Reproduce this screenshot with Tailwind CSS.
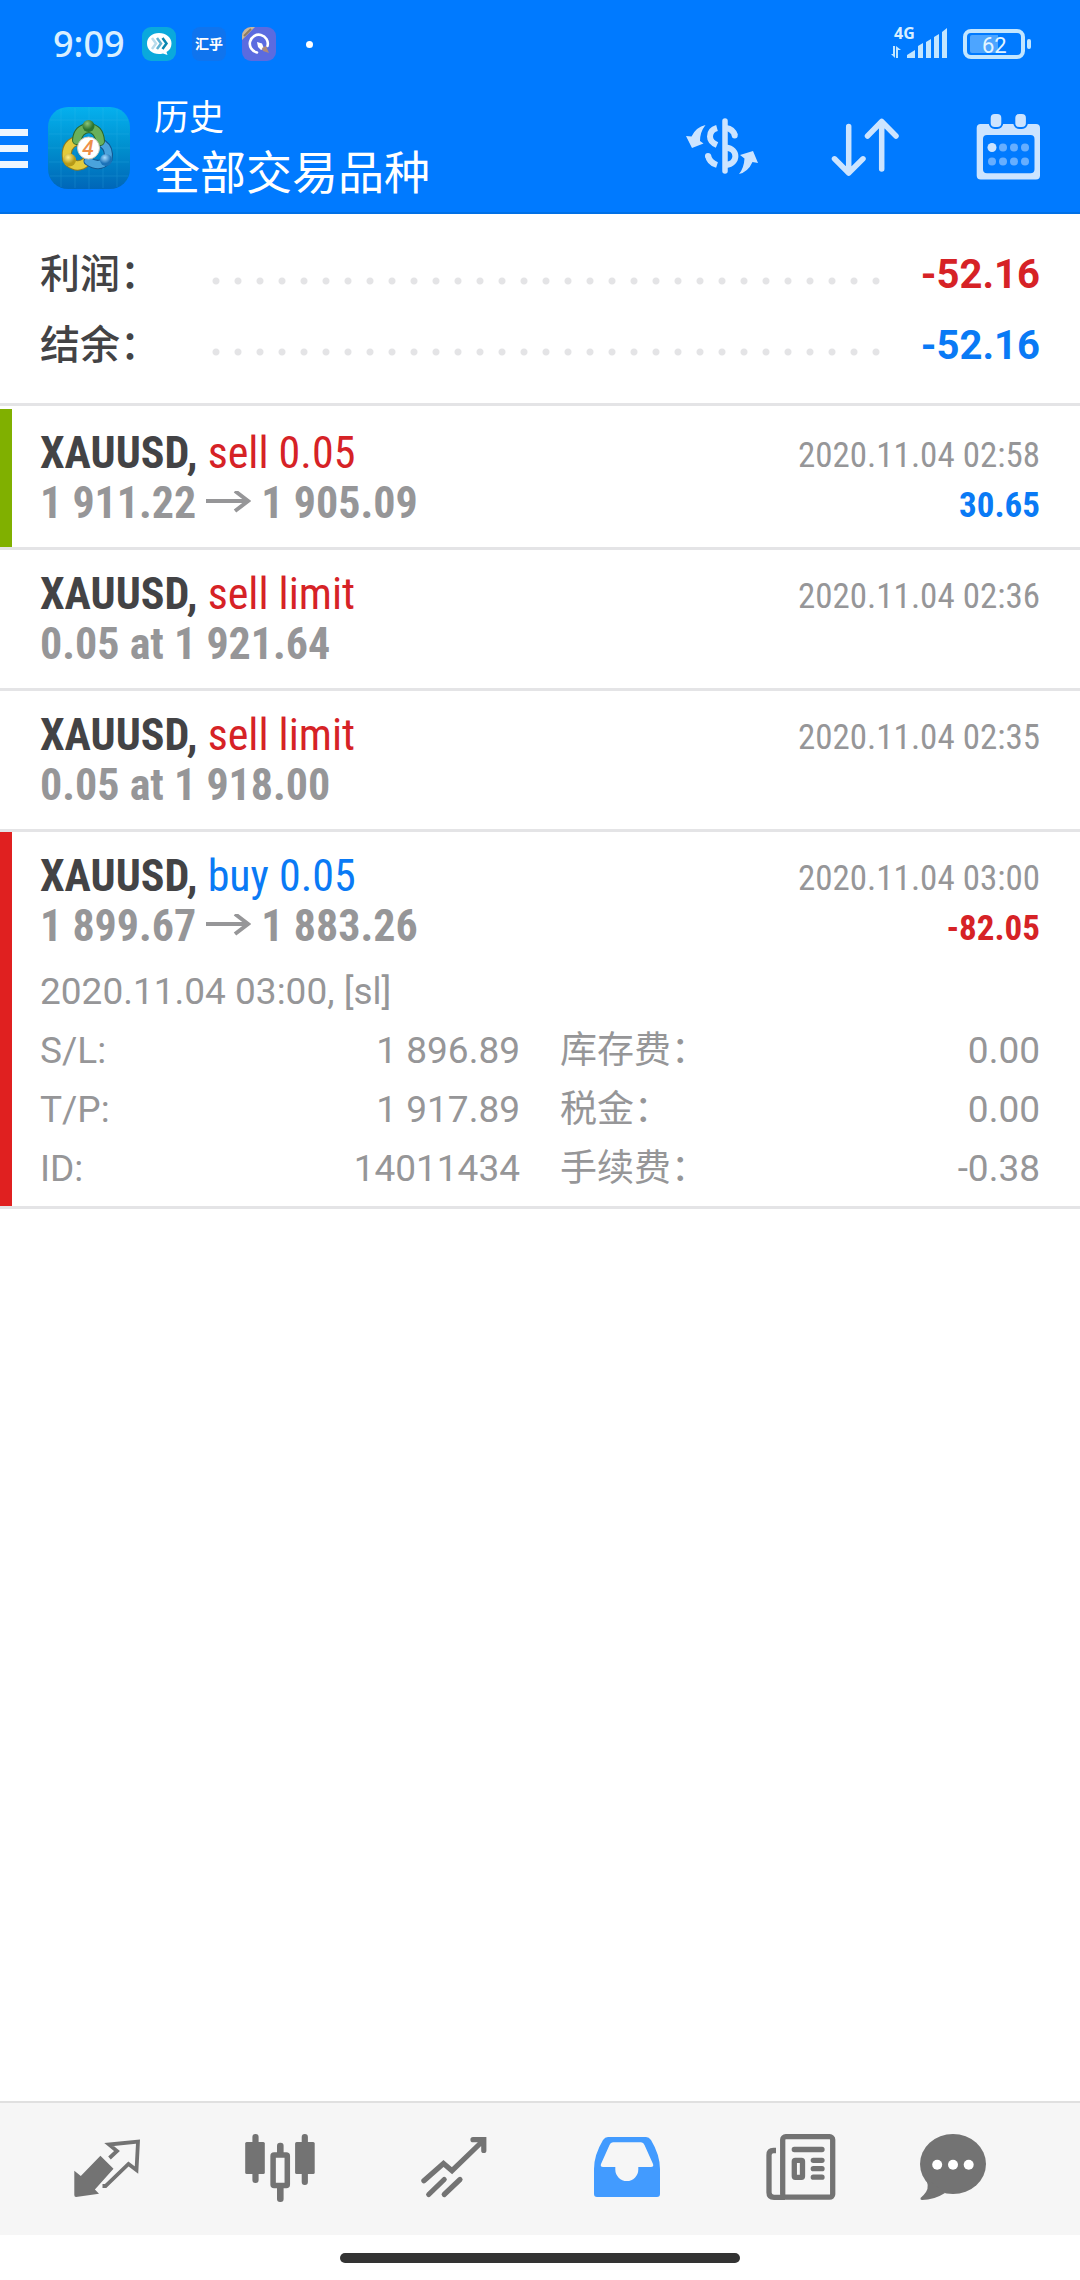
<!DOCTYPE html>
<html lang="zh-CN">
<head>
<meta charset="utf-8">
<meta name="viewport" content="width=device-width, initial-scale=1">
<title>历史</title>
<script src="https://cdn.jsdelivr.net/npm/@tailwindcss/browser@4"></script>
</head>
<body class="flex min-h-screen flex-col bg-white font-[Roboto,'Noto_Sans_CJK_SC',sans-serif] text-[#969698]">

<header class="border-b-2 border-[#0070e6] bg-[#007aff] pb-1 text-white">
  <!-- Status bar -->
  <div class="flex h-[88px] items-center justify-between pr-12 pl-[53px] text-[#d9efff]">
    <div class="flex items-center gap-4">
      <span class="w-[73px] font-['Noto_Sans',sans-serif] text-[36px] leading-[40px] font-medium">9:09</span>
      <svg class="size-[34px]" viewBox="0 0 34 34" aria-hidden="true">
        <rect width="34" height="34" rx="9" fill="#0aa9dc"/>
        <path d="M17 6c7 0 12.500 4.500 12.500 10.500 0 4-2 7-5 8.500l1 3-4.500-1.500c-1.300.4-2.700.5-4 .5-7 0-12-4.500-12-10.500S10 6 17 6z" fill="#fff"/>
        <g fill="none" stroke-width="2.500"><path d="M10 11l4 5.500-4 5.500" stroke="#b9dcec"/><path d="M15 11l4 5.500-4 5.500" stroke="#5fb2d2"/><path d="M20.500 11l4 5.500-4 5.500" stroke="#0a86b0"/></g>
      </svg>
      <span class="flex size-[34px] items-center justify-center rounded-lg bg-[#0f74ee] text-[14px] leading-[20px] font-bold text-white">汇乎</span>
      <svg class="size-[34px]" viewBox="0 0 34 34" aria-hidden="true">
        <defs><clipPath id="tile"><rect width="34" height="34" rx="9"/></clipPath></defs>
        <g clip-path="url(#tile)"><rect width="34" height="34" fill="#5b6be0"/><path d="M0 0h13L0 13z" fill="#c9b79a"/><path d="M2 9L9 2" stroke="#8d7b62" stroke-width="2"/></g>
        <path d="M15 25.500A9 9 0 1 1 25.500 19" fill="none" stroke="#fff" stroke-width="2.600" stroke-linecap="round"/>
        <path d="M15 15l5 1.500 2 5-3 1.500-3-3z" fill="#fff"/><path d="M20 21l4-2 3 7-6-2z" fill="#b08a78"/>
      </svg>
      <span class="ml-[14px] size-[7px] rounded-full bg-white"></span>
    </div>
    <svg class="h-[36px] w-[142px] overflow-visible" viewBox="0 0 142 36" role="img" aria-label="4G 62%">
      <text x="4" y="13" font-family="Noto Sans" font-size="16" font-weight="700" fill="#d9efff">4G</text>
      <g fill="#c3e6ff">
        <path d="M3 20h2v12l-4-4h2zM8 32h-2V20l5 4H8z"/>
        <path d="M17 32v-3l8-5v8zM28 32V20l5-3v15zM36 32V16l5-3v19zM44 32V11l5-3v24zM52 32V6l5-4v30z"/>
        <rect x="137" y="13" width="4" height="10" rx="2"/>
      </g>
      <rect x="75" y="5" width="58" height="26" rx="6" fill="none" stroke="#c3e6ff" stroke-width="4"/>
      <path d="M82 9h26v18H82q-2 0-2-2V11q0-2 2-2z" fill="#4da5ff"/>
      <text x="92" y="27" font-family="Roboto" font-size="22" fill="#e3f5ff">62</text>
    </svg>
  </div>

  <!-- Toolbar -->
  <div class="flex h-[120px] items-center pr-10">
    <button type="button" aria-label="菜单" class="flex w-7 flex-col gap-[9px] text-white">
      <span class="h-[7px] bg-[#ecf6ff]"></span><span class="h-[7px] bg-[#ecf6ff]"></span><span class="h-[7px] bg-[#ecf6ff]"></span>
    </button>
    <svg class="ml-5 size-[82px] shrink-0" viewBox="0 0 82 82" aria-hidden="true">
      <defs>
        <linearGradient id="bg" x1="0" y1="0" x2="0" y2="1"><stop offset="0" stop-color="#05b0ee"/><stop offset=".5" stop-color="#008fce"/><stop offset="1" stop-color="#0066b8"/></linearGradient>
        <radialGradient id="gr" cx=".4" cy=".3"><stop offset="0" stop-color="#8cc478"/><stop offset="1" stop-color="#2c7530"/></radialGradient>
        <radialGradient id="ye" cx=".4" cy=".3"><stop offset="0" stop-color="#fff08a"/><stop offset="1" stop-color="#b79a18"/></radialGradient>
        <radialGradient id="bl" cx=".4" cy=".3"><stop offset="0" stop-color="#a8dcff"/><stop offset="1" stop-color="#1b72b8"/></radialGradient>
      </defs>
      <rect width="82" height="82" rx="20" fill="url(#bg)"/>
      <path d="M13 2v78M27 1v80M41 0v82M55 1v80M69 2v78M2 13h78M1 27h80M0 41h82M1 55h80M2 69h78" stroke="#4cc4f2" stroke-width="1" opacity=".18"/>
      <path d="M28 34Q17 38 19 52M21 55Q30 62 38 55" fill="none" stroke="#8d7a20" stroke-width="10" stroke-linecap="round"/>
      <path d="M28 34Q17 38 19 52M21 55Q30 62 38 55" fill="none" stroke="#e3cb3c" stroke-width="8" stroke-linecap="round"/>
      <path d="M55 37Q62 42 60 52Q52 62 40 54" fill="none" stroke="#12568f" stroke-width="9" stroke-linecap="round"/>
      <path d="M55 37Q62 42 60 52Q52 62 40 54" fill="none" stroke="#4aa3dc" stroke-width="7" stroke-linecap="round"/>
      <path d="M29 33Q30 22 41 21Q51 22 52 34" fill="none" stroke="#2b662a" stroke-width="10" stroke-linecap="round"/>
      <path d="M29 33Q30 22 41 21Q51 22 52 34" fill="none" stroke="#69b05a" stroke-width="8" stroke-linecap="round"/>
      <circle cx="40.500" cy="19" r="6" fill="url(#gr)"/><circle cx="21.500" cy="53" r="6.500" fill="url(#ye)"/><circle cx="58" cy="53" r="6" fill="url(#bl)"/>
      <circle cx="40.500" cy="41" r="11" fill="#fff" stroke="#cfcabc"/>
      <text x="40" y="48" text-anchor="middle" font-family="Roboto" font-size="21" font-style="italic" font-weight="500" fill="#ee8f4a">4</text>
    </svg>
    <div class="ml-6 flex flex-1 flex-col pb-1">
      <span class="text-[35px] leading-[54px]">历史</span>
      <h1 class="text-[46px] leading-[54px]">全部交易品种</h1>
    </div>
    <div class="flex items-center gap-[75px] text-[#cce4ff]">
      <button type="button" aria-label="交易品种">
        <svg class="block h-[66px] w-[72px] overflow-visible" viewBox="0 0 72 66" fill="none" stroke="currentColor" stroke-width="6">
          <path d="M39 6v50" stroke-linecap="round" stroke-width="5.500"/>
          <path d="M31 13Q24 15 24 21.500Q24 27 31 30M22 40Q23 47.500 31 50M40 13Q47 14 49 20.500" />
          <path d="M22 41v0M48.700 20.500v0" stroke-linecap="round"/>
          <path d="M40 32.500C52.500 34 52.500 48.500 40 50"/>
          <path d="M0 21L6 33L17.500 28.500L14 26Q14 17 19.500 10Q10 12 5.500 21.500ZM72 48L67 36L54 40L58.500 43.500Q58 53 53 59Q62 57 66.500 47Z" fill="currentColor" stroke="none"/>
        </svg>
      </button>
      <button type="button" aria-label="排序">
        <svg class="block h-[66px] w-[68px] overflow-visible" viewBox="0 0 68 66" fill="none" stroke="currentColor" stroke-width="5.500" stroke-linecap="round" stroke-linejoin="round">
          <path d="M15.700 11.500V58M1.500 43.800L15.700 58L30 43.800M48.700 54V6.500M34.500 21L48.700 6.500L63 21"/>
        </svg>
      </button>
      <button type="button" aria-label="日期">
        <svg class="block h-[66px] w-[64px] overflow-visible" viewBox="0 0 64 66">
          <path fill="currentColor" fill-rule="evenodd" d="M4.700 9H60q4 0 4 4V60.500q0 4-4 4H4.700q-4 0-4-4V13q0-4 4-4zM11 20q-4 0-4 4V54.300q0 4 4 4H54.500q4 0 4-4V24q0-4-4-4z"/>
          <g fill="currentColor" stroke="#007aff" stroke-width="2"><rect x="13.700" y="-2" width="12.600" height="15" rx="5"/><rect x="38.300" y="-2" width="12.600" height="15" rx="5"/></g>
          <g fill="#66aeff"><circle cx="16" cy="32.500" r="4.500" fill="#cce4ff"/><circle cx="27" cy="32.500" r="4"/><circle cx="38" cy="32.500" r="4"/><circle cx="49" cy="32.500" r="4"/><circle cx="16" cy="46.500" r="4"/><circle cx="27" cy="46.500" r="4"/><circle cx="38" cy="46.500" r="4"/><circle cx="49" cy="46.500" r="4"/></g>
        </svg>
      </button>
    </div>
  </div>
</header>

<main class="flex-1">
  <!-- Totals -->
  <dl class="border-b-3 border-[#e4e4e6] px-10 pt-[25px] pb-[22px] text-[40px] leading-[71px]">
    <div class="flex">
      <dt class="w-[165px] font-medium text-[#434345]">利润：</dt>
      <dd class="mt-[38px] h-[8px] flex-1 bg-[radial-gradient(circle,#e4e4e6_3px,transparent_4px)] bg-[length:22px_8px]" aria-hidden="true"></dd>
      <dd class="w-[153px] text-right font-bold text-[#d62226]">-52.16</dd>
    </div>
    <div class="flex">
      <dt class="w-[165px] font-medium text-[#434345]">结余：</dt>
      <dd class="mt-[38px] h-[8px] flex-1 bg-[radial-gradient(circle,#e4e4e6_3px,transparent_4px)] bg-[length:22px_8px]" aria-hidden="true"></dd>
      <dd class="w-[153px] text-right font-bold text-[#0a7af5]">-52.16</dd>
    </div>
  </dl>

  <!-- Deals and orders -->
  <ul class="pt-[3px] font-['Roboto_Condensed','Liberation_Sans_Narrow',Roboto,'Noto_Sans_CJK_SC',sans-serif] leading-[50px]">
    <li class="border-b-3 border-[#e4e4e6]">
      <div class="flex justify-between border-l-12 border-[#80b000] pt-[19px] pr-10 pb-4 pl-7">
        <div class="text-[44px]">
          <p><b class="text-[#434345]">XAUUSD,</b> <span class="text-[#d62226]">sell 0.05</span></p>
          <p class="flex items-center gap-[10px] font-bold">1 911.22
            <svg class="h-6 w-[45px]" viewBox="0 0 45 24" fill="none" stroke="currentColor" stroke-width="4" aria-hidden="true"><path d="M0 10H42M29 0L42 10L29 20"/></svg>
            1 905.09</p>
        </div>
        <div class="pt-[3px] text-right text-[35px]">
          <time class="block" datetime="2020-11-04T02:58">2020.11.04 02:58</time>
          <p class="font-bold text-[#0a7af5]">30.65</p>
        </div>
      </div>
    </li>
    <li class="border-b-3 border-[#e4e4e6]">
      <div class="flex justify-between px-10 py-[19px]">
        <div class="text-[44px]">
          <p><b class="text-[#434345]">XAUUSD,</b> <span class="text-[#d62226]">sell limit</span></p>
          <p class="font-bold">0.05 at 1 921.64</p>
        </div>
        <time class="pt-[3px] text-[35px]" datetime="2020-11-04T02:36">2020.11.04 02:36</time>
      </div>
    </li>
    <li class="border-b-3 border-[#e4e4e6]">
      <div class="flex justify-between px-10 py-[19px]">
        <div class="text-[44px]">
          <p><b class="text-[#434345]">XAUUSD,</b> <span class="text-[#d62226]">sell limit</span></p>
          <p class="font-bold">0.05 at 1 918.00</p>
        </div>
        <time class="pt-[3px] text-[35px]" datetime="2020-11-04T02:35">2020.11.04 02:35</time>
      </div>
    </li>
    <li class="border-b-3 border-[#e4e4e6]">
      <div class="border-l-12 border-[#e02020] pt-[19px] pr-10 pb-2 pl-7">
        <div class="flex justify-between">
          <div class="text-[44px]">
            <p><b class="text-[#434345]">XAUUSD,</b> <span class="text-[#0a7af5]">buy 0.05</span></p>
            <p class="flex items-center gap-[10px] font-bold">1 899.67
              <svg class="h-6 w-[45px]" viewBox="0 0 45 24" fill="none" stroke="currentColor" stroke-width="4" aria-hidden="true"><path d="M0 10H42M29 0L42 10L29 20"/></svg>
              1 883.26</p>
          </div>
          <div class="pt-[3px] text-right text-[35px]">
            <time class="block" datetime="2020-11-04T03:00">2020.11.04 03:00</time>
            <p class="font-bold text-[#d62226]">-82.05</p>
          </div>
        </div>
        <div class="pt-2 font-[Roboto,'Noto_Sans_CJK_SC',sans-serif] text-[37px] leading-[59px]">
          <p>2020.11.04 03:00, [sl]</p>
          <dl class="grid grid-cols-2 gap-x-10">
            <div class="flex justify-between"><dt>S/L:</dt><dd>1 896.89</dd></div>
            <div class="flex justify-between"><dt>库存费：</dt><dd>0.00</dd></div>
            <div class="flex justify-between"><dt>T/P:</dt><dd>1 917.89</dd></div>
            <div class="flex justify-between"><dt>税金：</dt><dd>0.00</dd></div>
            <div class="flex justify-between"><dt>ID:</dt><dd>14011434</dd></div>
            <div class="flex justify-between"><dt>手续费：</dt><dd>-0.38</dd></div>
          </dl>
        </div>
      </div>
    </li>
  </ul>
</main>

<!-- Bottom tabs -->
<nav class="grid h-[134px] grid-cols-[173fr_173fr_173fr_173fr_173fr_130fr] items-center justify-items-center border-t-2 border-[#e0e0e0] bg-[#f6f6f6] pr-[62px] pl-5 text-[#737373]">
  <button type="button" aria-label="行情">
    <svg class="block size-[72px]" viewBox="0 0 72 72" fill="currentColor">
      <path d="M3.300 37.700L9.800 43L29.400 22.700L42.500 35.700L23.900 56.500L28 60.700L5 64Q3.300 64 3.300 62Z"/>
      <path d="M38.500 25L46 18L38 11.500L67 8.500L65.500 37L57.500 31L34.500 53H31.500" fill="none" stroke="currentColor" stroke-width="3.800"/>
    </svg>
  </button>
  <button type="button" aria-label="图表">
    <svg class="block size-[72px]" viewBox="0 0 72 72" fill="currentColor">
      <rect x="8.400" y="1" width="6.200" height="49" rx="3"/><rect x="1.200" y="9" width="19.600" height="32" rx="1.500"/>
      <rect x="57.700" y="1" width="6.200" height="51" rx="3"/><rect x="51.100" y="9" width="19.600" height="32" rx="1.500"/>
      <rect x="33" y="9.700" width="6.600" height="14" rx="3"/><rect x="33" y="50" width="6.600" height="19" rx="3"/>
      <rect x="29.100" y="22" width="14.200" height="30.500" rx="1" fill="none" stroke="currentColor" stroke-width="5.500"/>
    </svg>
  </button>
  <button type="button" aria-label="交易">
    <svg class="block size-[72px]" viewBox="0 0 72 72" fill="none" stroke="currentColor" stroke-width="5.200" stroke-linecap="round">
      <path d="M5.900 47.700L25.500 30.500L34 37.700L65.800 7M55 6.700H65.800V17.500M10.700 61.500L26.200 46.500M26.200 61.500L42 46.500"/>
    </svg>
  </button>
  <button type="button" aria-label="历史" aria-current="page" class="text-[#429bff]">
    <svg class="block size-[72px]" viewBox="0 0 72 72" fill="currentColor">
      <path fill-rule="evenodd" d="M17 4H55Q58 4 60 7Q69 22 69 36V61Q69 64 66 64H6Q3 64 3 61V36Q3 22 12 7Q14 4 17 4ZM22 9.300Q19.500 9.300 18.500 12L10 31Q9 34 12 34H24.300V36.500A11.500 11.500 0 0 0 47.300 36.500V34H60Q63 34 62 31L53.500 12Q52.500 9.300 50 9.300Z"/>
    </svg>
  </button>
  <button type="button" aria-label="新闻">
    <svg class="block size-[72px]" viewBox="0 0 72 72" fill="none" stroke="currentColor" stroke-width="5.300">
      <rect x="17.700" y="3.700" width="50" height="60.500" rx="3"/><path d="M11 17.500H8.500Q4 17.500 4 22V59.500Q4 64.300 9 64.300H20"/>
      <path d="M29.300 16.500H57M48.300 27.300H57M48.300 35.700H57M48.300 44.200H57" stroke-linecap="round"/>
      <rect x="29.300" y="27.300" width="8.200" height="17" rx="1"/>
    </svg>
  </button>
  <button type="button" aria-label="消息">
    <svg class="block size-[72px]" viewBox="0 0 72 72" fill="currentColor">
      <ellipse cx="36" cy="31" rx="33" ry="30"/><path d="M8 44Q13 53 9 59Q7 62 3.500 65Q3 67 5 67Q17 67 28 60Z"/>
      <g fill="#fff"><circle cx="20.200" cy="31.700" r="5"/><circle cx="36" cy="31.700" r="5"/><circle cx="51.700" cy="31.700" r="5"/></g>
    </svg>
  </button>
</nav>
<div class="flex h-[45px] items-center justify-center"><span class="h-[10px] w-[400px] rounded-full bg-[#333]"></span></div>

</body>
</html>
